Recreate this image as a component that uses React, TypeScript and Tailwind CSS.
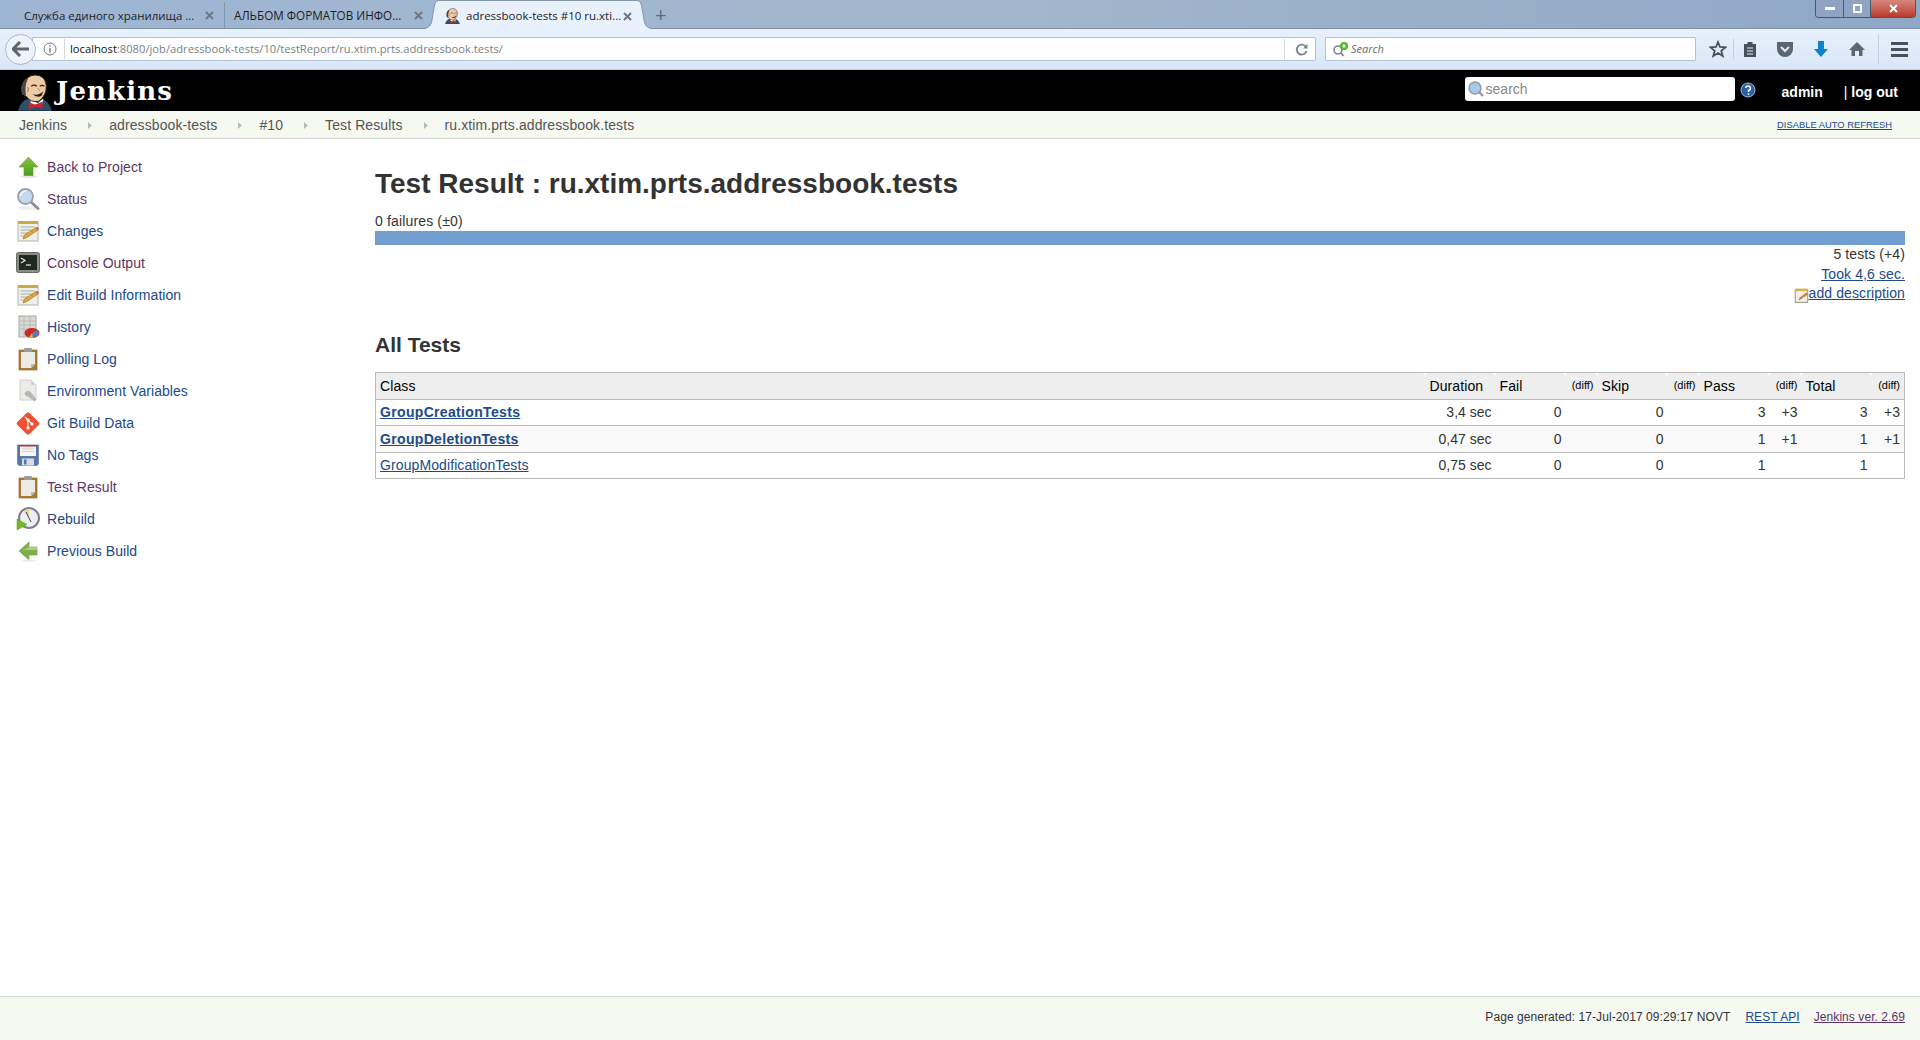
import type { ReactNode } from "react";

const SANS = "font-['Liberation_Sans',Arial,sans-serif]";

const ArrowUpIcon = () => (
  <svg width="24" height="24" viewBox="0 0 24 24">
    <defs>
      <linearGradient id="gUp" x1="0" y1="0" x2="0" y2="1">
        <stop offset="0" stopColor="#8cc63f" />
        <stop offset="1" stopColor="#4c9a1c" />
      </linearGradient>
    </defs>
    <ellipse cx="12.5" cy="21.5" rx="9" ry="1.5" fill="#e6e6e6" />
    <path d="M12.5 2 L22 12 H17 V20.5 H8 V12 H3 Z" fill="url(#gUp)" stroke="#5b9c2a" strokeWidth=".6" />
  </svg>
);

const ArrowLeftIcon = () => (
  <svg width="24" height="24" viewBox="0 0 24 24">
    <path d="M3 12 L13 3 V8 H21 V16 H13 V21 Z" fill="#7fb24c" stroke="#6a9c3e" strokeWidth=".6" />
    <path d="M13 8 H21 V11 H8 Z" fill="#a9cf7f" />
    <ellipse cx="13" cy="21.5" rx="7" ry="1.2" fill="#e8e8e8" />
  </svg>
);

const SearchIcon = () => (
  <svg width="24" height="24" viewBox="0 0 24 24">
    <ellipse cx="11" cy="21" rx="9" ry="2" fill="#eeeeee" />
    <path d="M15 15 L22 21.5" stroke="#8b8f94" strokeWidth="3" strokeLinecap="round" />
    <circle cx="9.5" cy="9.5" r="7.5" fill="#c6d9f0" stroke="#9aa3ad" strokeWidth="1.8" />
    <path d="M4.5 9 A5.5 5.5 0 0 1 10 4" fill="none" stroke="#ffffff" strokeWidth="1.5" />
  </svg>
);

const NotepadIcon = () => (
  <svg width="24" height="24" viewBox="0 0 24 24">
    <rect x="2" y="3" width="20" height="19" fill="#f0f0ec" stroke="#b4b4ac" />
    <rect x="2" y="2" width="20" height="3" fill="#c9a94e" />
    <path d="M4.5 8 H19 M4.5 11 H17 M4.5 14 H12 M4.5 17 H9" stroke="#a9a9a4" />
    <path d="M7 20 L9 15.5 L19.5 9 L22 11 L11 18.5 Z" fill="#e2a63c" stroke="#9c6a1c" strokeWidth=".6" />
    <path d="M19.5 9 L22 11 L23 9.5 L21 8 Z" fill="#d5533f" />
  </svg>
);

const TerminalIcon = () => (
  <svg width="24" height="24" viewBox="0 0 24 24">
    <rect x="0.5" y="1.5" width="23" height="20" rx="2" fill="#8a8c86" stroke="#666862" />
    <rect x="3" y="4" width="18" height="15" fill="#1f2a1f" />
    <path d="M5 7 L9 9.5 L5 12" fill="none" stroke="#e8e8e8" strokeWidth="1.2" />
    <path d="M10 14 H15" stroke="#e8e8e8" strokeWidth="1.2" />
    <rect x="16" y="20" width="1" height="1" fill="#8fd14f" />
  </svg>
);

const HistoryIcon = () => (
  <svg width="24" height="24" viewBox="0 0 24 24">
    <rect x="3" y="1" width="17" height="21" fill="#d9d9d6" stroke="#a8a8a4" />
    <path d="M3 6 H20 M3 10 H20 M3 14 H20 M8 1 V22 M14 1 V22" stroke="#b9b9b5" />
    <ellipse cx="16" cy="18" rx="7.5" ry="5" fill="#cc2b22" />
    <path d="M16 18 L21 15 L23 19 Q21 22 17 23 Z" fill="#4f7fb8" />
    <path d="M16 18 L17 23 L13 22.6 Z" fill="#d8c23a" />
  </svg>
);

const ClipboardIcon = () => (
  <svg width="24" height="24" viewBox="0 0 24 24">
    <rect x="3" y="3" width="18" height="20" fill="#ad7a34" stroke="#8a5f24" strokeWidth=".6" />
    <path d="M5 5 H19 V17 L15 21 H5 Z" fill="#ecebe6" />
    <path d="M15 21 L19 17 H15 Z" fill="#bdbdb8" />
    <rect x="8" y="1" width="8" height="4" rx="1" fill="#9b9b97" />
  </svg>
);

const DocWrenchIcon = () => (
  <svg width="24" height="24" viewBox="0 0 24 24">
    <path d="M4 1 H15 L20 6 V21 H4 Z" fill="#ecebe8" stroke="#d0d0cc" />
    <path d="M15 1 V6 H20 Z" fill="#d4d4d0" />
    <path d="M9 15 A3 3 0 0 1 14 13 L20 20 L18.5 22 L12 17 A3 3 0 0 1 9 15 Z" fill="#b7b8b4" stroke="#9e9f9b" strokeWidth=".5" />
  </svg>
);

const GitIcon = () => (
  <svg width="25" height="25" viewBox="0 0 24 24">
    <rect x="3.5" y="3.5" width="17" height="17" rx="2" transform="rotate(45 12 12)" fill="#f05133" />
    <path d="M9 5.5 L16 12.5 M12 8.5 V16" stroke="#ffffff" strokeWidth="1.1" />
    <circle cx="12" cy="8.5" r="1.5" fill="#fff" />
    <circle cx="12" cy="16.5" r="1.5" fill="#fff" />
    <circle cx="16" cy="12.5" r="1.5" fill="#fff" />
  </svg>
);

const FloppyIcon = () => (
  <svg width="24" height="24" viewBox="0 0 24 24">
    <rect x="1" y="1" width="22" height="22" fill="#eef0f3" />
    <path d="M1.5 2 H22.5 V21 L21 22.5 H3 L1.5 21 Z" fill="#5577a8" stroke="#476a9c" strokeWidth=".5" />
    <rect x="4" y="2" width="16" height="11" fill="#f6f6f6" />
    <rect x="4" y="2" width="16" height="1.5" fill="#d8262b" />
    <path d="M6 6 H18 M6 8.5 H18" stroke="#cfcfcf" />
    <rect x="6" y="15.5" width="12" height="7" fill="#d6dbe2" />
    <rect x="8" y="16.5" width="2.5" height="5" fill="#5577a8" />
  </svg>
);

const RebuildIcon = () => (
  <svg width="24" height="24" viewBox="0 0 24 24">
    <circle cx="13" cy="11" r="10" fill="#eeeef2" stroke="#7f7b95" strokeWidth="2" />
    <path d="M13 11 L8 4 A9 9 0 0 1 13 2 Z" fill="#e9d98c" />
    <path d="M13 11 L10 5 M13 11 L15 15" stroke="#444" strokeWidth="1" />
    <path d="M1 12 L11 17.5 L1 23 Z" fill="#76b82a" stroke="#5f9a1f" strokeWidth=".5" />
  </svg>
);

const JenkinsHead = ({ size, className }: { size: number; className?: string }) => (
  <svg width={size} height={size * 1.08} viewBox="0 0 36 39" className={className}>
    <path d="M0 39 Q2 29 11 26 L25 26 Q33 29 36 39 Z" fill="#2f4f68" />
    <path d="M13 27 L21 31 L27 26 L25 34 L18 33 L14 35 Z" fill="#ffffff" />
    <path d="M11 30 L18 32.5 L26 29.5 L26 37 L18.5 34.5 L12 38 Z" fill="#cf2229" />
    <path d="M6.5 13 Q7 2 18 1 Q29 1.5 30 12 Q30.5 23 22 29 Q13 30.5 9 24 Q3.5 22 5.5 17 Z" fill="#eecba6" stroke="#2a211c" strokeWidth="1" />
    <path d="M7 6 Q1 13 4.5 22 L8.5 23 Q6.5 13 10.5 5 Q8 4.5 7 6 Z" fill="#4a4642" />
    <path d="M14 13 Q17 10.5 20 13 M23 13 Q25.5 11 28 13" fill="none" stroke="#2a211c" strokeWidth="1.3" />
    <path d="M15 21 Q21 24 27 18 L25 23 Q20 26 15 21 Z" fill="#2a211c" />
    <path d="M21 15 L23 18" stroke="#a97f60" strokeWidth="1" />
    <path d="M10 14 Q12.5 16.5 10 19" fill="none" stroke="#8f6a4f" strokeWidth="1" />
  </svg>
);

const CloseX = ({ color = "#6f7780" }: { color?: string }) => (
  <svg width="9" height="9" viewBox="0 0 9 9">
    <path d="M1 1 L8 8 M8 1 L1 8" stroke={color} strokeWidth="2" />
  </svg>
);

const sideItems: { label: string; icon: ReactNode; visited?: boolean }[] = [
  { label: "Back to Project", icon: <ArrowUpIcon />, visited: true },
  { label: "Status", icon: <SearchIcon />, visited: true },
  { label: "Changes", icon: <NotepadIcon /> },
  { label: "Console Output", icon: <TerminalIcon />, visited: true },
  { label: "Edit Build Information", icon: <NotepadIcon /> },
  { label: "History", icon: <HistoryIcon /> },
  { label: "Polling Log", icon: <ClipboardIcon /> },
  { label: "Environment Variables", icon: <DocWrenchIcon /> },
  { label: "Git Build Data", icon: <GitIcon /> },
  { label: "No Tags", icon: <FloppyIcon /> },
  { label: "Test Result", icon: <ClipboardIcon />, visited: true },
  { label: "Rebuild", icon: <RebuildIcon /> },
  { label: "Previous Build", icon: <ArrowLeftIcon /> },
];

const crumbs = ["Jenkins", "adressbook-tests", "#10", "Test Results", "ru.xtim.prts.addressbook.tests"];

const rows = [
  { name: "GroupCreationTests", bold: true, duration: "3,4 sec", pass: "3", passDiff: "+3", total: "3", totalDiff: "+3", bg: "bg-white", h: "h-[26px]" },
  { name: "GroupDeletionTests", bold: true, duration: "0,47 sec", pass: "1", passDiff: "+1", total: "1", totalDiff: "+1", bg: "bg-[#f9f9f9]", h: "h-[27px]" },
  { name: "GroupModificationTests", bold: false, duration: "0,75 sec", pass: "1", passDiff: "", total: "1", totalDiff: "", bg: "bg-white", h: "h-[26px]" },
];

const TabFlare = ({ flip }: { flip?: boolean }) => (
  <svg width="14" height="29" viewBox="0 0 14 29" className={flip ? "-scale-x-100 block" : "block"}>
    <path d="M0 29 Q7 28 8 20 L10 8 Q11 1 14 1 V29 Z" fill="#e8f1fc" />
    <path d="M0 28.5 Q7 28 8 20 L10 8 Q11 1 14 .5" fill="none" stroke="#8196b0" />
  </svg>
);

const Browser = () => (
  <div className="font-['Open_Sans',sans-serif] select-none">
    <div className="h-[29px] flex justify-between bg-gradient-to-r from-[#9db5d4] via-[#a3b7cc] to-[#8fa8c8] border-b border-[#7c8fa8]">
      <div className="flex items-start pl-[14px] h-[29px] text-[11.5px] text-[#1c1c1c] whitespace-nowrap">
        <div className="w-[210px] h-[27px] mt-[2px] flex items-center justify-between pl-[10px] pr-[10px]">
          <span>Служба единого хранилища ...</span>
          <CloseX />
        </div>
        <div className="w-px h-[27px] mt-[2px] bg-[#8296ae]" />
        <div className="w-[198px] h-[27px] mt-[2px] flex items-center justify-between pl-[9px] pr-0">
          <span className="text-[11.7px]">АЛЬБОМ ФОРМАТОВ ИНФО...</span>
          <CloseX />
        </div>
        <div className="flex h-[29px] ml-[1px] relative">
          <TabFlare />
          <div className="w-[200px] h-[29px] pt-[2px] flex items-center justify-between pl-[7px] pr-[6px] bg-[#e8f1fc] border-t border-[#8196b0]">
            <div className="flex items-center gap-[6px]">
              <JenkinsHead size={15} />
              <span>adressbook-tests #10 ru.xti...</span>
            </div>
            <CloseX />
          </div>
          <TabFlare flip />
        </div>
        <div className="h-[29px] flex items-center pl-[3px] text-[#5a6b80] text-[20px] leading-none">+</div>
      </div>
      <div className="flex h-[18px] w-[101px] mr-[4px] rounded-b-[4px] border border-t-0 border-[#47586e] overflow-hidden">
        <div className="w-[28px] flex items-center justify-center bg-[#8ea4c2] border-r border-[#47586e]">
          <div className="w-[10px] h-[3px] bg-white" />
        </div>
        <div className="w-[27px] flex items-center justify-center bg-[#8ea4c2] border-r border-[#47586e]">
          <div className="w-[9px] h-[9px] border-2 border-white" />
        </div>
        <div className="flex-1 flex items-center justify-center bg-gradient-to-b from-[#d8877d] to-[#b8382c]">
          <CloseX color="#ffffff" />
        </div>
      </div>
    </div>
    <div className="h-[41px] flex items-center bg-gradient-to-b from-[#e8f1fc] to-[#d9e7f7] border-b border-[#bccde0] pl-[5px]">
      <div className="relative z-10 w-[31px] h-[31px] shrink-0 rounded-full bg-[#eef4fb] border border-[#a6b8cf] flex items-center justify-center">
        <svg width="18" height="16" viewBox="0 0 18 16">
          <path d="M8 1 L1 8 L8 15 M2 8 H17" fill="none" stroke="#5c6670" strokeWidth="3" />
        </svg>
      </div>
      <div className="w-[1284px] shrink-0 -ml-[4px] h-[24px] bg-white border border-[#b3c2d4] rounded-r-[2px] flex items-center text-[11.2px]">
        <svg width="14" height="14" viewBox="0 0 14 14" className="ml-[10px]">
          <circle cx="7" cy="7" r="6" fill="none" stroke="#6f7780" />
          <path d="M7 6 V10.5 M7 3.2 V4.8" stroke="#6f7780" strokeWidth="1.4" />
        </svg>
        <div className="w-px h-[20px] bg-[#d5d9de] ml-[7px] mr-[5px]" />
        <span className="flex-1 pt-px">
          <span className="text-[#111]">localhost</span>
          <span className="text-[#7a7f85]">:8080/job/adressbook-tests/10/testReport/ru.xtim.prts.addressbook.tests/</span>
        </span>
        <div className="w-px h-[20px] bg-[#d5d9de] mr-[10px]" />
        <svg width="13" height="13" viewBox="0 0 13 13" className="mr-[7px]">
          <path d="M11 4 A5 5 0 1 0 11.5 8" fill="none" stroke="#7a828a" strokeWidth="1.8" />
          <path d="M12.5 0.8 V5.5 H8 Z" fill="#7a828a" />
        </svg>
      </div>
      <div className="w-[371px] shrink-0 ml-[9px] h-[24px] bg-white border border-[#b3c2d4] rounded-[1px] flex items-center pl-[6px] text-[11px] italic text-[#6a6a6a]">
        <svg width="17" height="15" viewBox="0 0 17 15">
          <circle cx="6" cy="8" r="4" fill="none" stroke="#7d8690" strokeWidth="1.6" />
          <path d="M9 11 L11.5 14" stroke="#7d8690" strokeWidth="1.8" />
          <circle cx="12" cy="4" r="4" fill="#4fb81f" />
          <path d="M12 2 V6 M10 4 H14" stroke="#fff" strokeWidth="1.2" />
        </svg>
        <span className="ml-[2px] pt-px">Search</span>
      </div>
      <div className="flex items-center ml-[13px]">
        <svg width="18" height="18" viewBox="0 0 18 18">
          <path d="M9 2 L11 7 L16.5 7.4 L12.3 10.8 L13.7 16 L9 13.1 L4.3 16 L5.7 10.8 L1.5 7.4 L7 7 Z" fill="none" stroke="#46515c" strokeWidth="1.8" />
        </svg>
        <div className="w-px h-[20px] bg-[#c3cfdc] ml-[6px] mr-[8px]" />
        <svg width="16" height="18" viewBox="0 0 16 18">
          <path d="M2 4 H5.5 V2 H10.5 V4 H14 V17 H2 Z" fill="#46515c" />
          <path d="M5 8 H11 M5 11 H11 M5 14 H11" stroke="#e1ebf7" strokeWidth="1.2" />
        </svg>
        <svg width="18" height="16" viewBox="0 0 18 16" className="ml-[18px]">
          <path d="M1 1 H17 V8 A8 8 0 0 1 1 8 Z" fill="#5b6670" />
          <path d="M5 6 L9 10 L13 6" fill="none" stroke="#e1ebf7" strokeWidth="2" />
        </svg>
        <svg width="16" height="18" viewBox="0 0 16 18" className="ml-[19px]">
          <path d="M5 1 H11 V9 H15 L8 17 L1 9 H5 Z" fill="#0a84cc" />
        </svg>
        <svg width="18" height="16" viewBox="0 0 18 16" className="ml-[19px]">
          <path d="M9 1 L17 9 H14.5 V15 H11 V10 H7 V15 H3.5 V9 H1 Z" fill="#5b6670" />
        </svg>
        <div className="w-px h-[30px] bg-[#c3cfdc] ml-[12px] mr-[12px]" />
        <div className="w-[17px] flex flex-col gap-[3px]">
          <div className="h-[3px] bg-[#46515c]" />
          <div className="h-[3px] bg-[#46515c]" />
          <div className="h-[3px] bg-[#46515c]" />
        </div>
      </div>
    </div>
  </div>
);

const Header = () => (
  <div className={`h-[41px] bg-black flex items-end justify-between ${SANS}`}>
    <div className="flex items-end pl-[18px]">
      <JenkinsHead size={34} />
      <span className="text-white font-['DejaVu_Serif',serif] font-bold text-[26px] tracking-[1.1px] leading-[38px] ml-[4px] mb-[1px]">
        Jenkins
      </span>
    </div>
    <div className="h-full flex items-center pr-[22px] pt-[4px]">
      <div className="w-[270px] h-[24px] -mt-[7px] bg-white rounded-[3px] flex items-center pl-[2px] text-[14px] text-[#888]">
        <svg width="18" height="18" viewBox="0 0 18 18">
          <path d="M11 11 L16 16" stroke="#9a9a9a" strokeWidth="2.4" />
          <circle cx="8" cy="8" r="6" fill="#a8c8ea" stroke="#8e9aa8" strokeWidth="1.4" />
        </svg>
        <span className="ml-px">search</span>
      </div>
      <svg width="16" height="16" viewBox="0 0 16 16" className="ml-[5px] -mt-[6px]">
        <circle cx="8" cy="8" r="7" fill="#2a5ea8" stroke="#9fbde6" />
        <path d="M5.8 6 A2.3 2.3 0 1 1 8.5 8.5 V10 M8.5 11.2 V12.8" fill="none" stroke="#fff" strokeWidth="1.5" />
      </svg>
      <span className="text-white font-bold text-[14px] ml-[26px]">admin</span>
      <span className="text-white text-[14px] ml-[21px] font-bold">
        <span className="font-normal">|</span> log out
      </span>
    </div>
  </div>
);

const Breadcrumbs = () => (
  <div className={`h-[28px] pt-px bg-[#f6f8f2] border-b border-[#d3d7cf] flex items-center justify-between pl-[19px] pr-[28px] text-[14px] tracking-[0.1px] text-[#555] ${SANS}`}>
    <div className="flex items-center">
      {crumbs.map((c, i) => (
        <div key={c} className="flex items-center">
          <span>{c}</span>
          {i < crumbs.length - 1 && (
            <svg width="4" height="7" viewBox="0 0 4 7" className="ml-[21px] mr-[17px]">
              <path d="M0 0 L4 3.5 L0 7 Z" fill="#bbb" />
            </svg>
          )}
        </div>
      ))}
    </div>
    <a className="text-[9.4px] tracking-normal text-[#204a87] underline">DISABLE AUTO REFRESH</a>
  </div>
);

const Sidebar = () => (
  <div className="w-[375px] shrink-0 pt-[12px] pl-[16px]">
    {sideItems.map((item) => (
      <div key={item.label} className="h-8 flex items-center gap-[7px] text-[14px] tracking-[0.05px]">
        <div className="w-[24px] flex justify-center">{item.icon}</div>
        <a className={item.visited ? "text-[#5c3566]" : "text-[#204a87]"}>{item.label}</a>
      </div>
    ))}
  </div>
);

const th = "relative h-[27px] bg-[#eeeeee] text-left font-normal text-[14px] text-black px-1 tracking-[0.1px]";
const diffTh = "relative h-[27px] bg-[#eeeeee] text-right font-normal text-[11px] text-black px-1 pb-[2px]";
const td = "px-1 text-right text-[14px] text-[#333]";

// little sort marker at the top right of every header cell
const Tick = () => (
  <span className="absolute top-0 right-0 translate-x-1/2 w-0 h-0 border-x-[3px] border-t-[3px] border-x-transparent border-t-white" />
);

const ResultsTable = () => (
  <table className="w-full table-fixed border-collapse border border-[#bbbbbb]">
    <colgroup>
      <col />
      <col className="w-[70px]" />
      <col className="w-[70px]" />
      <col className="w-[32px]" />
      <col className="w-[70px]" />
      <col className="w-[32px]" />
      <col className="w-[70px]" />
      <col className="w-[32px]" />
      <col className="w-[70px]" />
      <col className="w-[33px]" />
    </colgroup>
    <thead>
      <tr>
        <th className={th}>Class<Tick /></th>
        <th className={th}>Duration<Tick /></th>
        <th className={th}>Fail<Tick /></th>
        <th className={diffTh}>(diff)<Tick /></th>
        <th className={th}>Skip<Tick /></th>
        <th className={diffTh}>(diff)<Tick /></th>
        <th className={th}>Pass<Tick /></th>
        <th className={diffTh}>(diff)<Tick /></th>
        <th className={th}>Total<Tick /></th>
        <th className={diffTh}>(diff)</th>
      </tr>
    </thead>
    <tbody>
      {rows.map((r) => (
        <tr key={r.name} className={`${r.bg} ${r.h} border-t border-[#bbbbbb]`}>
          <td className="px-1 text-[14px]">
            <a className={`text-[#204a87] underline ${r.bold ? "font-bold tracking-[0.33px]" : "tracking-[0.1px]"}`}>{r.name}</a>
          </td>
          <td className={td}>{r.duration}</td>
          <td className={td}>0</td>
          <td className={td} />
          <td className={td}>0</td>
          <td className={td} />
          <td className={td}>{r.pass}</td>
          <td className={td}>{r.passDiff}</td>
          <td className={td}>{r.total}</td>
          <td className={td}>{r.totalDiff}</td>
        </tr>
      ))}
    </tbody>
  </table>
);

const Main = () => (
  <div className="flex-1 pt-[27px] pr-[15px] text-[14px] text-[#333]">
    <h1 className="text-[28px] leading-[36px] font-bold">Test Result : ru.xtim.prts.addressbook.tests</h1>
    <div className="mt-[9px] leading-[20px] tracking-[0.15px]">0 failures (±0)</div>
    <div className="h-[14px] bg-[#729fcf]" />
    <div className="flex flex-col items-end leading-[19.5px] tracking-[0.1px]">
      <div>5 tests (+4)</div>
      <a className="text-[#204a87] underline">Took 4,6 sec.</a>
      <div className="flex items-center h-[20px]">
        <svg width="15" height="15" viewBox="0 0 24 24" className="mt-[3px]">
          <rect x="2" y="3" width="20" height="20" fill="#f0f0ec" stroke="#8e8e88" strokeWidth="1.5" />
          <rect x="2" y="1" width="20" height="4" fill="#d8b24a" />
          <path d="M7 20 L9 15 L20 7 L23 10 L11 18 Z" fill="#c9872c" />
        </svg>
        <a className="text-[#204a87] underline">add description</a>
      </div>
    </div>
    <h2 className="mt-[27px] text-[21px] leading-[28px] font-bold">All Tests</h2>
    <div className="mt-[13px]">
      <ResultsTable />
    </div>
  </div>
);

const Footer = () => (
  <div className="h-[44px] pb-[3px] bg-[#f6f8f2] border-t border-[#d3d7cf] flex items-center justify-end pr-[15px] text-[12px] tracking-[0.07px] text-[#333]">
    <span>Page generated: 17-Jul-2017 09:29:17 NOVT</span>
    <a className="ml-[15px] text-[#204a87] underline">REST API</a>
    <a className="ml-[14px] text-[#5c3566] underline">Jenkins ver. 2.69</a>
  </div>
);

const App = () => {
  return (
    <div className={`w-[1920px] h-[1040px] flex flex-col overflow-hidden bg-white ${SANS}`}>
      <Browser />
      <Header />
      <Breadcrumbs />
      <div className="flex-1 flex min-h-0">
        <Sidebar />
        <Main />
      </div>
      <Footer />
    </div>
  );
};

export default App;
